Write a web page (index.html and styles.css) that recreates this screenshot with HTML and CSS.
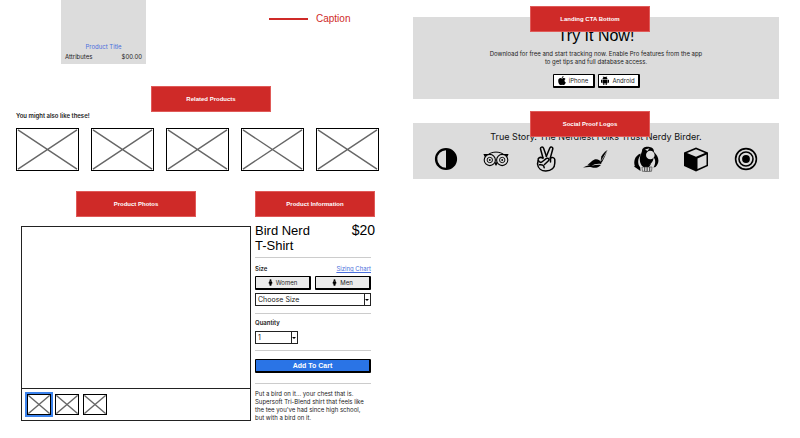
FILE: index.html
```html
<!DOCTYPE html>
<html lang="en">
<head>
<meta charset="utf-8">
<title>Nerdy Birder wireframes</title>
<link rel="stylesheet" href="styles.css">
</head>
<body>
<svg class="defs" aria-hidden="true">
  <symbol id="cross" viewBox="0 0 63 43" preserveAspectRatio="none">
    <path d="M1 1L62 42M62 1L1 42" fill="none" stroke="#666" stroke-width="1.400" vector-effect="non-scaling-stroke"/>
  </symbol>
  <symbol id="person" viewBox="0 0 6 8">
    <circle cx="3" cy="1.2" r="1.2"/><path d="M1.5 2.5h3L5.5 5l-1 .3L4 8H2L1.500 5.300.5 5z"/>
  </symbol>
</svg>
<main class="page">
  <section class="column">
    <div class="top">
      <article class="card">
        <a class="card-title" href="#product">Product Title</a>
        <div class="card-row"><span>Attributes</span><span>$00.00</span></div>
      </article>
      <div class="caption"><span class="caption-line"></span><span>Caption</span></div>
    </div>
    <div class="tag related-tag">Related Products</div>
    <h2 class="label">You might also like these!</h2>
    <div class="related">
      <svg class="photo"><use href="#cross"/></svg>
      <svg class="photo"><use href="#cross"/></svg>
      <svg class="photo"><use href="#cross"/></svg>
      <svg class="photo"><use href="#cross"/></svg>
      <svg class="photo"><use href="#cross"/></svg>
    </div>
    <div class="product" id="product">
      <section class="gallery">
        <div class="tag gallery-tag">Product Photos</div>
        <div class="frame">
          <div class="stage"></div>
          <div class="thumbs">
            <svg class="thumb selected"><use href="#cross"/></svg>
            <svg class="thumb"><use href="#cross"/></svg>
            <svg class="thumb"><use href="#cross"/></svg>
          </div>
        </div>
      </section>
      <section class="info">
        <div class="tag">Product Information</div>
        <div class="name-row"><h1>Bird Nerd<br>T-Shirt</h1><span class="price">$20</span></div>
        <form class="form">
          <div class="block size-block">
            <div class="size-row"><label class="label" for="size">Size</label><a href="#chart">Sizing Chart</a></div>
            <div class="pair">
              <button type="button" class="btn grey"><svg class="person"><use href="#person"/></svg>Women</button>
              <button type="button" class="btn grey"><svg class="person"><use href="#person"/></svg>Men</button>
            </div>
            <div class="select"><select id="size"><option>Choose Size</option></select></div>
          </div>
          <div class="block quantity-block">
            <label class="label" for="quantity">Quantity</label>
            <div class="select short"><select id="quantity"><option>1</option></select></div>
          </div>
          <div class="block cart-block"><button type="button" class="btn blue">Add To Cart</button></div>
        </form>
        <p class="block about">Put a bird on it... your chest that is.<br>Supersoft Tri-Blend shirt that feels like<br>the tee you've had since high school,<br>but with a bird on it.</p>
      </section>
    </div>
  </section>

  <section class="column right">
    <section class="panel cta">
      <div class="tag over">Landing CTA Bottom</div>
      <h2 class="headline">Try It Now!</h2>
      <p>Download for free and start tracking now. Enable Pro features from the app<br>to get tips and full database access.</p>
      <div class="stores">
        <button type="button" class="btn store"><svg class="store-icon" viewBox="0 0 16 18"><path d="M11 0c.2 2-1.500 4-3.400 4C7.400 2 9 .4 11 0zM8 5c1 0 2-1 3.800-1 1.400 0 2.500.8 3.200 1.800-3 1.700-2.500 5.700.6 7C14.800 15 13.200 18 11.400 18c-1.200 0-1.700-.7-3.100-.7S6.300 18 5.200 18C2.800 18 .4 13.500.4 9.800.4 6.300 2.600 4.200 4.900 4.200 6.300 4.200 7.200 5 8 5z"/></svg>iPhone</button>
        <button type="button" class="btn store"><svg class="store-icon" viewBox="0 0 16 18"><path d="M3 6a5 4.500 0 0 1 10 0zM3 7h10v7.500H3zM4.500 14h2.200v4H4.500zM9.300 14h2.200v4H9.300zM0 7.500h2.200v6H0zM13.800 7.500H16v6h-2.200z"/><path d="M5.500 2.500L4.300.5M10.500 2.500L11.700.5" stroke="#000"/></svg>Android</button>
      </div>
    </section>
    <section class="panel proof">
      <div class="tag over">Social Proof Logos</div>
      <h2 class="story">True Story. The Nerdiest Folks Trust Nerdy Birder.</h2>
      <div class="logos">
        <svg class="logo" viewBox="0 0 26 26"><circle cx="13" cy="13" r="9.900" fill="none" stroke="#000" stroke-width="2.400"/><path d="M13 3a10 10 0 0 1 0 20z"/></svg>
        <svg class="logo" viewBox="0 0 26 26"><g fill="none" stroke="#000"><path d="M1 8.500h4.200C9.500 5.300 16.500 5.300 20.800 8.500H25" stroke-width="1"/><circle cx="6.800" cy="14" r="5.600" stroke-width="1.100"/><circle cx="19.200" cy="14" r="5.600" stroke-width="1.100"/><circle cx="6.800" cy="14" r="2.700" stroke-width=".9"/><circle cx="19.200" cy="14" r="2.700" stroke-width=".9"/></g><circle cx="6.800" cy="14" r=".9"/><circle cx="19.200" cy="14" r=".9"/><path d="M11.500 17.500L13 20l1.500-2.500-1.500-2zM.4 8h4L1.800 11zM25.600 8h-4l2.600 3z"/></svg>
        <svg class="logo" viewBox="0 0 26 26"><g fill="none" stroke="#000" stroke-width="1.500" stroke-linecap="round" stroke-linejoin="round"><path d="M10 12L7.600 3.200C7 1 9.800.2 10.600 2.300L13.400 10.300"/><path d="M13.400 10.300L16.800 2C17.800.2 20.300 1.100 19.700 3.200L17.400 11.600"/><path d="M10 12C7 10.500 4.500 12 5.200 14.500L4.500 18C5 22.500 8.500 25 12.800 25 18.500 25 21.800 21.800 21.800 17V13.500C21.600 11.500 19 11 17.400 12"/><path d="M5.500 14.500C6.500 16.500 8 17 9.500 15.500L13.500 12.300C15.800 11.800 16.800 13.500 15.200 15L11.500 18.500M17.500 12v4M6.500 18.800c2.500-.6 4.500.6 4.700 3"/></g></svg>
        <svg class="logo" viewBox="0 0 26 26"><path d="M0 21.500C3 19.800 5.500 19.200 7.500 19L4.500 18.800C7 17.300 8 15 11.500 13.500 14.500 12.600 17.500 14.500 18.500 17L18 18C14 17.500 11 18.500 8.500 19.800 12 19 15 18.600 18 19 15 22 11.500 22.300 8.500 21.200 5.500 20.700 3 21.300 0 21.500z"/><path d="M17.500 16.500L18.300 10.500C20 7.500 22 5.500 24.500 4 23 8 21.500 11.500 18.800 16.500z"/><path d="M18.500 14.500L24.500 4.500" stroke="#dcdcdc" stroke-width=".7"/></svg>
        <svg class="logo" viewBox="0 0 26 26"><path d="M9 5C9 1.500 13 .2 16.500 1 19.500 1.300 21 3.300 21 6 25.500 10 27.500 16 22.500 21L20.500 21.500C23 17 22.500 13 20.500 11.500 20.500 16 17 19.500 12.500 20.500L9 20C6 16 6.500 11 8 8z"/><path d="M7.500 7.500C1.500 10 .5 15.500 1.800 20L1 20.500 7.500 25 7.200 21.200C4.500 18.500 4.500 12.500 7.500 9.500z"/><circle cx="17.300" cy="9" r="4.300" fill="#dcdcdc"/><path d="M12 3.500L16.500 2.300 14.500 5z" fill="#dcdcdc"/><path d="M8.800 14.500C9.500 18.500 14 19.500 18 18l-2 3h-6z"/><path d="M9 21h2.500v4.300H9.400zM11.800 21H14v4.500h-2.200zM14.300 21h2.200v4.500h-2.200zM16.800 21H19l-.5 4.300h-1.700z" fill="#dcdcdc" stroke="#333" stroke-width=".6"/></svg>
        <svg class="logo" viewBox="0 0 26 26"><path d="M13 1.500L25 6.500V20L13 25.500 1 20V6.500z"/><path d="M13 3.200L22 7 13 10.800 4 7zM14.500 12.500L23.500 8.500V19L14.500 23z" fill="#dcdcdc"/></svg>
        <svg class="logo" viewBox="0 0 26 26"><g fill="none" stroke="#000" stroke-width="1.600"><circle cx="13" cy="13" r="10.400"/><circle cx="13" cy="13" r="7"/></g><circle cx="13" cy="13" r="3.900"/></svg>
      </div>
    </section>
  </section>
</main>
</body>
</html>
```
FILE: styles.css
```css
* { box-sizing: border-box; }
body {
  margin: 0;
  background: #fff;
  color: #222;
  font: 6px/8px Inter, "Liberation Sans", sans-serif;
}
h1, h2, p { margin: 0; font-weight: normal; }
a { color: #4a6fdc; }
button, select { font: inherit; color: inherit; }
.defs { position: absolute; width: 0; height: 0; }

.page {
  display: grid;
  grid-template-columns: 363fr 366fr;
  gap: 34px;
  padding: 0 21px 0 16px;
}

.tag {
  display: flex;
  align-items: center;
  justify-content: center;
  width: 120px;
  height: 26px;
  border: 1px solid #e05a58;
  background: #cf2a28;
  color: #fff;
  font-family: "Liberation Sans", Arial, sans-serif;
  font-weight: bold;
}
.label { font-size: 6px; font-weight: 600; }

.top { display: flex; padding-left: 45px; }
.card {
  display: flex;
  flex-direction: column;
  justify-content: flex-end;
  gap: 2px;
  width: 85px;
  height: 64px;
  padding: 3px 4px;
  background: #dcdcdc;
}
.card-title { text-align: center; text-decoration: none; }
.card-row { display: flex; justify-content: space-between; }
.caption {
  display: flex;
  align-items: center;
  gap: 8px;
  height: 38px;
  margin-left: 123px;
  color: #cf2a28;
  font-family: "Liberation Sans", Arial, sans-serif;
  font-size: 10px;
}
.caption-line { width: 39px; height: 2px; background: #cf2a28; }

.related-tag { margin: 22px 0 0 135px; }
.related { display: flex; justify-content: space-between; margin-top: 8px; }
.photo { width: 63px; height: 43px; border: 1px solid #000; }

.product {
  display: grid;
  grid-template-columns: 230fr 120fr;
  gap: 4px;
  margin-top: 20px;
  padding: 0 4px 0 5px;
}
.gallery-tag { margin-left: 55px; }
.frame { margin-top: 9px; border: 1px solid #222; }
.stage { height: 161px; }
.thumbs { display: flex; gap: 4px; height: 32px; padding: 5px; border-top: 1px solid #222; }
.thumb { width: 24px; height: 21px; border: 1px solid #000; }
.selected { outline: 2px solid #3b82ec; }

.name-row {
  display: flex;
  justify-content: space-between;
  margin: 6px 0 4px;
  color: #000;
  font-family: "Liberation Sans", Arial, sans-serif;
}
h1 { font-size: 13px; line-height: 15px; }
.price { font-size: 14px; line-height: 15px; }
.block { margin-right: 4px; border-top: 1px solid #ccc; }
.size-block { padding: 7px 0; }
.size-row { display: flex; justify-content: space-between; }
.pair { display: flex; gap: 4px; margin: 3px 0; }
.btn {
  display: flex;
  align-items: center;
  justify-content: center;
  gap: 3px;
  height: 14px;
  padding: 0;
  border: 1px solid #000;
  border-width: 1px 2px 2px 1px;
  border-radius: 1px;
}
.grey { flex: 1; background: #ebebeb; }
.person { width: 5px; height: 7px; }
.select { position: relative; height: 13px; }
.select select {
  display: block;
  width: 100%;
  height: 100%;
  padding: 0 9px 0 2px;
  border: 1px solid #222;
  border-radius: 0;
  background: #fff;
  font-size: 7px;
  appearance: none;
}
.select::before {
  content: "";
  position: absolute;
  inset: 0 6px 0 auto;
  width: 1px;
  background: #222;
}
.select::after {
  content: "";
  position: absolute;
  top: 6px;
  right: 2px;
  border: 2px solid transparent;
  border-top-color: #000;
  border-bottom: 0;
}
.quantity-block { padding: 5px 0 6px; }
.quantity-block .label { display: block; margin-bottom: 4px; }
.short { width: 43px; }
.cart-block { padding: 8px 0 10px; }
.blue {
  width: 100%;
  background: #2a74e6;
  color: #fff;
  font-family: "Liberation Sans", Arial, sans-serif;
  font-size: 7px;
  font-weight: bold;
}
.about { padding-top: 6px; }

.right { padding-top: 17px; }
.panel { position: relative; background: #dcdcdc; text-align: center; }
.over { position: absolute; z-index: 1; left: calc(50% - 66px); }
.cta { height: 82px; padding-top: 9px; }
.cta .over { top: -11px; }
.headline {
  color: #000;
  font-family: "Liberation Sans", Arial, sans-serif;
  font-size: 16px;
  line-height: 20px;
}
.cta p { margin: 4px 0 8px; }
.stores { display: flex; justify-content: center; gap: 3px; }
.store { width: 42px; background: #fff; }
.store-icon { width: 8px; height: 9px; }
.proof { margin-top: 24px; padding: 8px 8px 7px; }
.proof .over { top: -12px; }
.story { color: #111; font-size: 9px; line-height: 12px; }
.logos { display: flex; justify-content: space-around; margin-top: 3px; }
.logo { width: 26px; height: 26px; }
```
